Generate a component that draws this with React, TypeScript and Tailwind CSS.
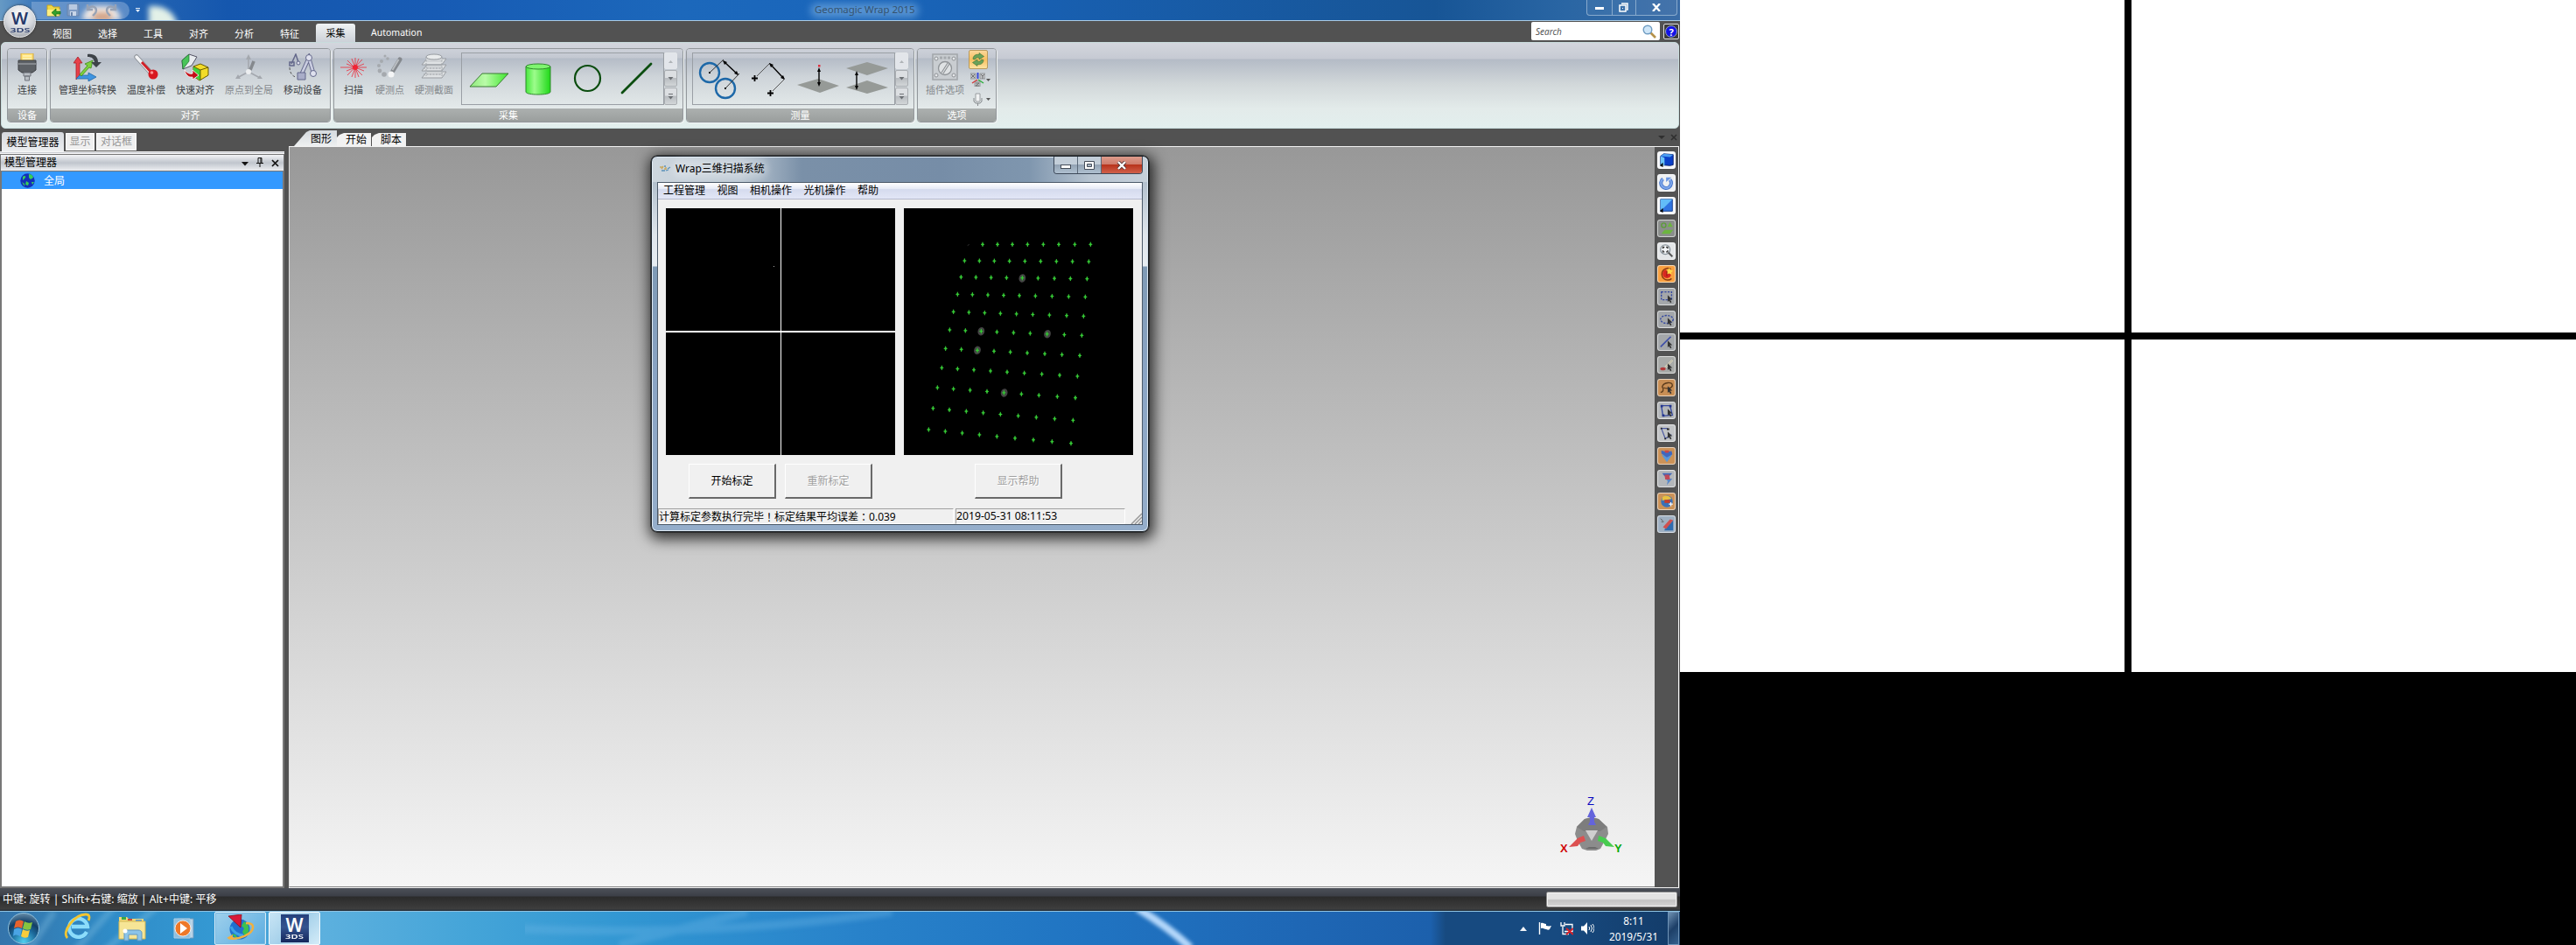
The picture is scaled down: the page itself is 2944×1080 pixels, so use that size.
import React from 'react';

const GRID: { x: number[]; y: [number, number] }[] = [
  { x: [309, 360, 411, 463, 517, 570, 625, 679], y: [148, 148] },
  { x: [247, 298, 349, 401, 454, 508, 562, 617, 673], y: [204, 207] },
  { x: [235, 286, 338, 391, 445, 499, 555, 610, 667], y: [260, 266] },
  { x: [223, 274, 327, 381, 435, 490, 547, 604, 661], y: [319, 328] },
  { x: [209, 262, 316, 370, 425, 481, 538, 597, 655], y: [379, 394] },
  { x: [196, 250, 304, 358, 415, 472, 530, 589, 649], y: [441, 460] },
  { x: [182, 236, 291, 348, 404, 462, 522, 581, 642], y: [505, 529] },
  { x: [169, 223, 279, 336, 393, 452, 512, 573, 634], y: [571, 600] },
  { x: [154, 209, 266, 324, 382, 442, 502, 565, 627], y: [639, 674] },
  { x: [139, 195, 253, 311, 370, 431, 493, 556, 619], y: [710, 751] },
  { x: [124, 181, 239, 298, 358, 420, 483, 547, 612], y: [783, 830] },
];
const BLOBS = [[445, 264], [304, 446], [531, 455], [291, 511], [383, 657]];

function CalibrationView() {
  return (
    <svg className="block h-[282px] w-[262px] bg-black" viewBox="39 24 786 846">
      {BLOBS.map(([x, y], i) => (
        <ellipse key={i} cx={x} cy={y} rx="11.500" ry="14.500" fill="#444" transform={`rotate(15 ${x} ${y})`} />
      ))}
      {GRID.map((r, i) =>
        r.x.map((x, j) => {
          const y = r.y[0] + ((r.y[1] - r.y[0]) * j) / (r.x.length - 1);
          return (
            <g key={`${i}-${j}`}>
              <ellipse cx={x} cy={y} rx="4" ry="5.500" fill="#2f8a2f" />
              <path d={`M${x - 6} ${y}h12M${x} ${y - 8}v16`} stroke="#35d035" strokeWidth="3" />
            </g>
          );
        }),
      )}
      <path d="M257 152l6-4" stroke="#333" strokeWidth="3" />
    </svg>
  );
}

function Icon({ children, w = 32, h = 32, vb }: { children: React.ReactNode; w?: number; h?: number; vb?: string }) {
  return (
    <svg width={w} height={h} viewBox={vb ?? `0 0 ${w} ${h}`} fill="none" className="block shrink-0">
      {children}
    </svg>
  );
}

const plug = (
  <Icon>
    <path d="M9 0h14v10H9z" fill="#ffe27a" stroke="#d4a93a" />
    <path d="M11 3h10M11 6h10" stroke="#fff3b8" strokeWidth="1.500" />
    <path d="M6 8h20v11l-4 3H10l-4-3z" fill="#5d6166" stroke="#3c3f43" />
    <path d="M6 12h20" stroke="#85898e" strokeWidth="2" />
    <path d="M12 22h8v4h-8zM13.500 26h5v5h-5z" fill="#b9bec4" stroke="#70757c" />
  </Icon>
);
const transform = (
  <Icon>
    <path d="M3 30V11H0l5-7 5 7H7v15z" fill="#e8404a" stroke="#a82028" strokeWidth=".8" />
    <path d="M3 29h14v3l9-5-9-5v3H7z" fill="#3f95e0" stroke="#2368a8" strokeWidth=".8" />
    <path d="M7 24L16 14l-3-2 9-4-2 9-2-1L9 26z" fill="#7ed03e" stroke="#3f8a1c" strokeWidth=".8" />
    <path d="M16 1c8-1 12 3 12 9h4l-6 6-6-6h4c-1-4-3-6-8-6z" fill="#3d4248" />
  </Icon>
);
const thermo = (
  <Icon>
    <path d="M5 4l17 19" stroke="#8e9399" strokeWidth="5.500" strokeLinecap="round" />
    <path d="M5 4l17 19" stroke="#f3f4f6" strokeWidth="3.500" strokeLinecap="round" />
    <path d="M11 10l13 14" stroke="#d02028" strokeWidth="2.800" />
    <circle cx="24" cy="24" r="5.500" fill="#d81820" />
    <circle cx="22.500" cy="22" r="1.800" fill="#ff8f90" />
  </Icon>
);
const quickAlign = (
  <Icon>
    <path d="M1 8L9 1l9 3-6 10L2 18z" fill="#e8ecef" stroke="#556" />
    <path d="M1 8L9 1v8L2 18z" fill="#48c458" stroke="#207030" strokeWidth=".7" />
    <path d="M14 15l8-3 9 4v9l-10 6-7-5z" fill="#f3dc28" stroke="#6b5c00" />
    <path d="M14 15l8 4v12l-8-5z" fill="#3ed23e" />
    <path d="M14 15l8 4 9-3M22 19v12" stroke="#6b5c00" />
    <path d="M4 19c3 4 7 5 9 4v-4l7 6-7 5v-3c-5 1-8-3-9-8z" fill="#c40e18" stroke="#fff" strokeWidth=".8" />
  </Icon>
);
const origin = (
  <Icon>
    <path d="M15 21V4M15 21L2 28M15 21l13 7M16 20l6-11" stroke="#a4a8ae" strokeWidth="1.600" />
    <path d="M15 1l3 6h-6zM0 29l3-5 3 5zM31 29h-6l3-4z" fill="#a4a8ae" />
    <path d="M17 19l4-10" stroke="#85898e" strokeWidth="3.500" />
    <circle cx="15" cy="21" r="3" fill="#eceef0" />
  </Icon>
);
const moveDevice = (
  <Icon>
    <path d="M14 25l9-20 5 17" stroke="#63678a" strokeWidth="4.500" />
    <path d="M14 25l9-20 5 17" stroke="#c9cce0" strokeWidth="2.700" />
    <path d="M10 22h9v8h-9z" fill="#a9adc8" stroke="#63678a" />
    <circle cx="23" cy="5" r="3.500" fill="#dfe1ee" stroke="#63678a" />
    <circle cx="28" cy="23" r="3.500" fill="#dfe1ee" stroke="#63678a" />
    <path d="M3 12L8 1l3 9M1 10h5v4H1z" stroke="#63678a" strokeWidth="1.500" />
    <circle cx="11" cy="11" r="2" fill="#dfe1ee" stroke="#63678a" />
    <path d="M1 16c0 6 3 10 7 11" stroke="#555" strokeDasharray="3 2" />
  </Icon>
);
const scan = (
  <Icon>
    <path d="M1 16h30M18 5v23M9 8l17 17M26 7L9 25M14 6l8 21M22 6l-8 21M8 12l20 8M28 12L8 20" stroke="#ee2a38" strokeWidth=".8" />
    <circle cx="18" cy="16" r="3" fill="#f02434" />
  </Icon>
);
const hardPoint = (
  <Icon>
    <g fill="#a5a9ae">
      <circle cx="10" cy="3" r="1.500" /><circle cx="13" cy="6" r="1.800" /><circle cx="6" cy="9" r="2" />
      <circle cx="3" cy="14" r="2" /><circle cx="4" cy="20" r="2.400" /><circle cx="9" cy="24" r="2.800" />
    </g>
    <path d="M19 20l8-13" stroke="#85898e" strokeWidth="5" strokeLinecap="round" />
    <path d="M18.500 19l7-12" stroke="#b9bdc1" strokeWidth="2" />
    <circle cx="17" cy="24" r="3.500" fill="#f4f5f6" />
  </Icon>
);
const hardSection = (
  <Icon>
    <path d="M2 28l6-7h22l-5 7zM2 20l6-7h22l-5 7zM2 13l6-7h22l-5 7z" fill="#dfe2e4" stroke="#999da2" />
    <path d="M7 4h18v6H7zM7 14h18v4H7zM7 21h18v4H7z" fill="#d0d3d6" />
    <ellipse cx="16" cy="4" rx="9" ry="3" fill="#e9ebec" stroke="#999da2" />
    <path d="M7 4v22M25 4v22M4 17h22M4 24h22" stroke="#a2a6ab" strokeDasharray="2 1.500" />
  </Icon>
);

function RibbonItem({ icon, label, off }: { icon: React.ReactNode; label: string; off?: boolean }) {
  return (
    <div className={off ? 'flex flex-col items-center gap-[3px] text-[#85898d]' : 'flex flex-col items-center gap-[3px] text-[#3c3f44]'}>
      {icon}
      <span className="whitespace-nowrap text-[11px] leading-[13px]">{label}</span>
    </div>
  );
}

function Group({ label, className, children }: { label: string; className: string; children: React.ReactNode }) {
  return (
    <div className={`flex h-[85px] shrink-0 flex-col overflow-hidden rounded-[4px] border border-[#92979b] shadow-[1px_1px_0_#f0f4f4] ${className}`}>
      <div className="flex h-[68px] items-start bg-[linear-gradient(#cdd1d9_0,#c3c8d1_10px,#b5bcc7_11px,#ced4d9_32px,#e4eaea_68px)]">{children}</div>
      <div className="flex h-[15px] items-center justify-center bg-[linear-gradient(#acb0af,#9a9e9d)] text-[11px] leading-none text-white">{label}</div>
    </div>
  );
}

function Gallery({ children, className }: { children: React.ReactNode; className: string }) {
  return (
    <div className={`mt-[4px] flex h-[60px] w-[247px] ${className}`}>
      <div className="flex w-[232px] border border-[#9a9fa5]">{children}</div>
      <div className="flex w-[15px] flex-col gap-px">
        <div className="flex h-[19px] items-center justify-center rounded-[2px] border border-[#e4e7ea] bg-[#e2e5ea]">
          <Icon w={7} h={4}><path d="M1 4l2.500-3L6 4z" fill="#aeb2b6" /></Icon>
        </div>
        <div className="flex h-[19px] items-center justify-center rounded-[2px] border border-[#a9adb1] bg-[linear-gradient(#dcdfe2_45%,#b8bcc0_50%,#d2d6d8)]">
          <Icon w={7} h={4}><path d="M.5 0h6l-3 3.500z" fill="#6c7074" /></Icon>
        </div>
        <div className="flex h-[20px] flex-col items-center justify-center gap-[2px] rounded-[2px] border border-[#a9adb1] bg-[linear-gradient(#dcdfe2_45%,#b8bcc0_50%,#d2d6d8)]">
          <div className="h-px w-[5px] bg-[#6c7074]" />
          <Icon w={7} h={4}><path d="M.5 0h6l-3 3.500z" fill="#6c7074" /></Icon>
        </div>
      </div>
    </div>
  );
}

function Defs() {
  return (
    <defs>
      <linearGradient id="gPlane"><stop stopColor="#8fe87c" /><stop offset=".4" stopColor="#b9fba8" /><stop offset="1" stopColor="#3fe62e" /></linearGradient>
      <linearGradient id="gCyl"><stop stopColor="#46e83c" /><stop offset=".35" stopColor="#9dfc8c" /><stop offset="1" stopColor="#1fd818" /></linearGradient>
    </defs>
  );
}

function Ribbon() {
  return (
    <div className="ml-px flex h-[99px] w-[1918px] rounded-[5px] border border-[#c8dcdc] bg-[linear-gradient(#d3d6dd_0,#c6cad3_18px,#b4bbc6_19px,#d2d8da_48px,#e3ebea_75px,#e2efee_98px)] pl-[6px] pt-[6px]">
      <Group label="设备" className="mr-[3px] w-[46px]">
        <div className="flex w-full justify-center pt-[5px]"><RibbonItem icon={plug} label="连接" /></div>
      </Group>
      <Group label="对齐" className="mr-[3px] w-[321px]">
        <div className="flex gap-3 pl-[9px] pt-[5px]">
          <RibbonItem icon={transform} label="管理坐标转换" />
          <RibbonItem icon={thermo} label="温度补偿" />
          <RibbonItem icon={quickAlign} label="快速对齐" />
          <RibbonItem icon={origin} label="原点到全局" off />
          <RibbonItem icon={moveDevice} label="移动设备" />
        </div>
      </Group>
      <Group label="采集" className="mr-[3px] w-[400px]">
        <div className="flex gap-[9px] pl-[6px] pt-[5px]">
          <RibbonItem icon={scan} label="扫描" />
          <RibbonItem icon={hardPoint} label="硬测点" off />
          <div className="pl-[3px]"><RibbonItem icon={hardSection} label="硬测截面" off /></div>
        </div>
        <Gallery className="ml-[9px]">
          <Icon w={230} h={58}>
            <Defs />
            <path d="M9 38l14-15h30L39 38z" fill="url(#gPlane)" stroke="#3b7a34" />
            <path d="M73 15v29c0 4 28 4 28 0V15z" fill="url(#gCyl)" stroke="#2f8a2c" />
            <ellipse cx="87" cy="15" rx="14" ry="3" fill="#7ff470" stroke="#2f8a2c" />
            <circle cx="143.500" cy="28.500" r="14.500" stroke="#0b4d0f" strokeWidth="2.200" />
            <path d="M183 45l33-33" stroke="#0b4d0f" strokeWidth="2.800" strokeLinecap="round" />
          </Icon>
        </Gallery>
      </Group>
      <Group label="测量" className="mr-[3px] w-[261px]">
        <Gallery className="ml-[6px]">
          <Icon w={230} h={58}>
            <circle cx="19" cy="22" r="11" stroke="#1d68a8" strokeWidth="2.400" />
            <circle cx="37" cy="40" r="11" stroke="#1d68a8" strokeWidth="2.400" />
            <path d="M19 22L35 7M37 40l16-17" stroke="#333" />
            <path d="M35 9l16 15" stroke="#000" strokeWidth="1.400" />
            <path d="M34 8l5 2-3 3zM52 25l-5-2 3-3zM18 21h2v2h-2zM36 39h2v2h-2z" fill="#000" />
            <path d="M67 28.500h7M70.500 25v7M85 45.500h7M88.500 42v7" stroke="#000" strokeWidth="1.800" />
            <path d="M73 26l15-15M91 43l13-13" stroke="#555" />
            <path d="M88 12l16 17" stroke="#000" strokeWidth="1.400" />
            <path d="M87 11l5 2-3 3zM105 30l-5-2 3-3z" fill="#000" />
            <path d="M119 36l24-7 24 8-22 8z" fill="#969a97" />
            <path d="M144 20v14" stroke="#000" strokeWidth="1.400" />
            <path d="M144 16l2 5h-4zM144 38l2-5h-4z" fill="#000" />
            <path d="M143 13h2.500v2.500H143z" fill="#e03040" />
            <path d="M175 17l24-7 24 7-24 8zM175 39l24-8 24 8-24 7z" fill="#969a97" />
            <path d="M187 24v14" stroke="#000" strokeWidth="1.400" />
            <path d="M187 20l2 5h-4zM187 42l2-5h-4z" fill="#000" />
          </Icon>
        </Gallery>
      </Group>
      <Group label="选项" className="w-[91px]">
        <div className="ml-[9px] pt-[5px]">
          <RibbonItem
            off
            label="插件选项"
            icon={
              <Icon>
                <path d="M2 1h28v29H2z" fill="#c9cdd1" stroke="#a2a6aa" strokeWidth="1.600" />
                <path d="M10 5h12" stroke="#a5a9ad" strokeWidth="3" strokeDasharray="3 1.500" />
                <circle cx="16" cy="17" r="7.500" fill="#dfe2e4" stroke="#8f9397" strokeWidth="1.300" />
                <path d="M12 22l7-11M14 23l7-11" stroke="#8f9397" strokeWidth="1.200" />
                <g stroke="#8f9397" fill="#e6e8ea"><circle cx="6" cy="6" r="2" /><circle cx="26" cy="6" r="2" /><circle cx="6" cy="25" r="2" /><circle cx="26" cy="25" r="2" /></g>
              </Icon>
            }
          />
        </div>
        <div className="ml-[5px] flex flex-col gap-[2px] pt-px">
          <div className="flex h-[22px] w-[22px] items-center justify-center rounded-[2px] border border-[#b99a5c] bg-[linear-gradient(#fbd79a,#f9c060_50%,#fde3a0)]">
            <Icon w={16} h={16}>
              <path d="M2 7.500C2 4 5 1.500 9 2.500V.5l5.500 4L9 8V6C6.500 5.500 5 6 4.500 8z" fill="#6aa25a" stroke="#3d7434" strokeWidth=".6" />
              <path d="M14 8.500C14 12 11 14.500 7 13.500v2l-5.500-4L7 8v2c2.500.5 4 0 4.500-2z" fill="#6aa25a" stroke="#3d7434" strokeWidth=".6" />
            </Icon>
          </div>
          <div className="flex h-[20px] items-center gap-px pl-[2px]">
            <Icon w={17} h={16}>
              <path d="M0 1h6v6H0zM11 1h6v6h-6zM5 10h6v6H5z" fill="#c2c5c8" stroke="#85898c" strokeWidth=".8" />
              <path d="M1 2l4 4M5 2L1 6M12 2l2 2 2-2M14 4v3M6 12h4l-4 3h4" stroke="#666" strokeWidth=".9" />
              <path d="M8.500 0v7" stroke="#3448d8" strokeWidth="2" />
              <path d="M8 8l-6 4" stroke="#d04040" strokeWidth="1.500" /><path d="M9 8l6 4" stroke="#30b040" strokeWidth="1.500" />
            </Icon>
            <Icon w={5} h={3}><path d="M0 0h5L2.500 3z" fill="#555" /></Icon>
          </div>
          <div className="flex h-[20px] items-center gap-[4px] pl-[5px]">
            <Icon w={11} h={15}>
              <path d="M3 1h5v9H3z" fill="#f1f2f3" stroke="#999da0" /><path d="M1 6v4l2 2h5l2-2V6M5.500 12v3" stroke="#85898c" />
            </Icon>
            <Icon w={5} h={3}><path d="M0 0h5L2.500 3z" fill="#555" /></Icon>
          </div>
        </div>
      </Group>
    </div>
  );
}

function TitleBar() {
  return (
    <div className="relative flex h-[24px] items-center justify-between overflow-hidden border-b border-[#a9cbe6] bg-[linear-gradient(90deg,#6699c4_0,#3b78bb_40px,#2565b3_150px,#1557ae_260px,#175bb4_500px,#1c68bb_780px,#1a66bb_950px,#185fb0_1200px,#175596_1640px,#2a66a4_1790px,#3a6ca6_1920px)]">
      <div className="absolute left-[170px] top-[7px] h-[30px] w-[33px] rounded-tr-[26px] bg-[#e3f1e8] blur-[3px]" />
      <div className="relative ml-[36px] flex h-[20px] w-[112px] items-center gap-[6px] overflow-hidden rounded-r-full bg-[#9dbbe0]/45 pl-[17px]">
        <div className="absolute left-[58px] top-[5px] h-[16px] w-[44px] rounded-t-full bg-[#f2ebe6] blur-[3px]" />
        <div className="absolute left-[70px] top-[12px] h-[10px] w-[22px] rounded-full bg-[#d3a285] blur-[3px]" />
        <div className="relative flex items-center gap-[6px]">
          <Icon w={17} h={16}>
            <path d="M1 2h5l2 2h7v10H1z" fill="#f0d848" stroke="#c6a520" /><path d="M1 7h15l-2 7H1z" fill="#ffee80" />
            <path d="M16 12h-5v3l-5-4.500L11 6v3h5z" fill="#34a02c" stroke="#136a10" strokeWidth=".7" />
          </Icon>
          <Icon w={15} h={15}>
            <path d="M1 1h13v13H1z" fill="#7f9cc4" stroke="#6984ab" /><path d="M3 1h9v6H3z" fill="#b8c9e0" /><path d="M4 9h7v5H4z" fill="#c9d6e8" /><path d="M5 10h2v4H5z" fill="#6984ab" />
          </Icon>
          <Icon w={16} h={15}><path d="M3 1v6h6M3 6c4-4 10-3 10 2 0 3-2 4-4 6" stroke="#98a3b5" strokeWidth="2.400" /></Icon>
          <Icon w={16} h={15}><path d="M13 1v6H7M13 6C9 2 3 3 3 8c0 3 2 4 4 6" stroke="#98a3b5" strokeWidth="2.400" /></Icon>
        </div>
      </div>
      <div className="absolute left-[155px] top-[9px]"><Icon w={5} h={5}><path d="M0 .5h5" stroke="#e9f1fa" /><path d="M0 2h5L2.500 5z" fill="#e9f1fa" /></Icon></div>
      <div className="absolute left-[926px] top-[4px] h-[16px] w-[124px] rounded-full bg-[#7fb2e4]/60 blur-[4px]" />
      <div className="absolute left-[931px] top-[4px] whitespace-nowrap text-[11.5px] leading-[14px] tracking-[-0.05px] text-[#35536f]">Geomagic Wrap 2015</div>
      <div className="relative mr-[3px] flex h-[24px] w-[104px] self-start">
        <div className="flex h-[19px] w-full -translate-y-px rounded-b-[4px] border border-t-0 border-[#88aacd] bg-white/5">
          <div className="flex w-[29px] items-center justify-center border-r border-[#88aacd] pt-[3px]"><div className="h-[3px] w-[10px] bg-white" /></div>
          <div className="flex w-[27px] items-center justify-center border-r border-[#88aacd] pr-[2px]">
            <Icon w={11} h={11}><path d="M3 1h7v7H9M1 3h7v7H1z" stroke="#fff" strokeWidth="1.500" /><path d="M4 6h1v1H4z" fill="#fff" /></Icon>
          </div>
          <div className="flex flex-1 items-center justify-center"><Icon w={10} h={9}><path d="M1 0l8 9M9 0L1 9" stroke="#fff" strokeWidth="2.300" /></Icon></div>
        </div>
      </div>
    </div>
  );
}

const TABS = ['视图', '选择', '工具', '对齐', '分析', '特征'];

function RibbonTabs() {
  return (
    <div className="flex h-[24px] items-stretch bg-[#525252] pl-[45px] text-[11px] leading-none text-white">
      {TABS.map((t) => (
        <div key={t} className="flex w-[52px] items-center justify-center pt-[4px]">{t}</div>
      ))}
      <div className="ml-[4px] mt-[3px] flex w-[45px] items-center justify-center rounded-t-[3px] bg-[linear-gradient(#f0f3f4,#ccd1d8)] text-black">采集</div>
      <div className="flex items-center pl-[18px] pt-[3px] text-[10.5px]">Automation</div>
      <div className="ml-auto mt-px flex h-[21px] w-[147px] items-center justify-between rounded-[2px] bg-white pl-[5px] pr-[4px]">
        <span className="text-[10px] italic text-[#555]">Search</span>
        <Icon w={16} h={16}>
          <path d="M9 9l6 6" stroke="#b5924a" strokeWidth="2.600" /><circle cx="6" cy="6" r="4.800" fill="#cfe6f8" stroke="#6f9cc2" strokeWidth="1.400" />
        </Icon>
      </div>
      <div className="ml-[4px] mr-px mt-[3px] flex h-[18px] w-[18px] items-center justify-center rounded-[2px] border border-[#e0e0e0] bg-[#3b3b3b]">
        <div className="flex h-[14px] w-[14px] items-center justify-center rounded-full border border-[#9ab] bg-[#1212e8] text-[11px] font-bold">?</div>
      </div>
    </div>
  );
}

function LeftPanel() {
  return (
    <div className="flex w-[325px] flex-col text-[12px] leading-none">
      <div className="flex h-[26px] items-end gap-[2px] pl-[2px] pt-[4px]">
        <div className="flex h-[22px] w-[71px] items-center justify-center rounded-t-[3px] bg-[linear-gradient(#d6d9de,#eceef0)] pt-[2px] text-black">模型管理器</div>
        <div className="mb-px flex h-[20px] w-[33px] items-center justify-center border border-white bg-[#f0f0f0] text-[#969696]">显示</div>
        <div className="mb-px flex h-[20px] w-[46px] items-center justify-center border border-white bg-[#f0f0f0] text-[#969696]">对话框</div>
      </div>
      <div className="h-[3px] border-y border-[#f6f6f6] bg-[#c9ccd2]" />
      <div className="flex h-[20px] items-center border border-[#777] bg-[linear-gradient(#f3f4f6,#c0c5cd_50%,#eceef1)] pl-[4px] pr-[5px] text-black">
        <span className="mr-auto">模型管理器</span>
        <div className="mr-[9px] mt-[2px]"><Icon w={8} h={5}><path d="M0 0h8L4 4.500z" fill="#111" /></Icon></div>
        <div className="mb-[2px] mr-[9px]"><Icon w={8} h={11}><path d="M2 6.500V.5h4v6M0 6.500h8M4 7v4M5 1v5" stroke="#111" /></Icon></div>
        <Icon w={9} h={9}><path d="M1 1l7 7M8 1L1 8" stroke="#111" strokeWidth="1.700" /></Icon>
      </div>
      <div className="flex-1 border-x-2 border-b-2 border-[#777] bg-white">
        <div className="flex h-[20px] items-center gap-[10px] bg-[#3399ff] pl-[21px] pt-px text-white">
          <Icon w={17} h={17}>
            <circle cx="8.500" cy="8.500" r="8.200" fill="#1230b8" />
            <path d="M3 4c2-2 4-1 3 1L3 8zM10 1c3 0 5 2 5 4l-3 2-2-2zM7 9l3 2-1 3-3-1zM13 10h3l-2 3zM2 10l3 2v3z" fill="#38cf58" />
          </Icon>
          <span>全局</span>
        </div>
      </div>
    </div>
  );
}

const cursor = <path d="M11 8l6 6h-3l2 3-1.500 1-2-3-1.500 2z" fill="#333" />;

const TOOLS: { bg: string; art: React.ReactNode }[] = [
  { bg: 'bg-[#f4f6f8]', art: <><path d="M2 5l4-3 12 1v13l-4 1-12-1z" fill="#0a3fc8" stroke="#0a1f6a" /><path d="M2 5l5 2v10l-5-1z" fill="#6cc4f8" /><path d="M2 5l4-3 12 1-4 3z" fill="#4a9cf0" /><path d="M1 17l4-4v6z" fill="#000" /></> },
  { bg: 'bg-[#eef0f2]', art: <><path d="M5 5a6.500 6.500 0 1 0 9 1" stroke="#3f6fc8" strokeWidth="4.400" /><path d="M5 5a6.500 6.500 0 1 0 9 1" stroke="#7da6ea" strokeWidth="2.500" /><path d="M9 9V3h7z" fill="#6a96e2" /></> },
  { bg: 'bg-[#f4f6f8]', art: <><path d="M2 2h15v15H2z" fill="#2f74e0" stroke="#163c88" /><path d="M2 2h15L2 17z" fill="#62bdf8" /><path d="M1 17l4-4v6z" fill="#000" /></> },
  { bg: 'bg-[#8b8e8c]', art: <><circle cx="6" cy="6" r="2.800" stroke="#5c9c3a" strokeWidth="1.500" /><path d="M14 2l3.500 6h-7zM3 17l4-5h11l-4 5z" fill="#6cb53f" /></> },
  { bg: 'bg-[#e4e6e8]', art: <><circle cx="8" cy="8" r="6" fill="#f4f6f8" stroke="#8a949c" strokeWidth="1.500" /><path d="M5 7V5h2M9 5h2v2M11 9v2H9M7 11H5V9" stroke="#333" strokeWidth="1.400" /><path d="M12 12l5 5" stroke="#555" strokeWidth="2.200" /></> },
  { bg: 'bg-[#f8a040]', art: <><path d="M15 4A7.500 7.500 0 1 0 16 16" stroke="#8a3a10" strokeWidth="1.600" /><circle cx="10" cy="10" r="5.500" fill="#d82820" /><path d="M13 2l1.500 3L18 6l-2.500 2 .5 3-3-1.500-3 1 .5-3L9 5l3-.500z" fill="#ffd848" /><path d="M10 6v7" stroke="#8a1010" /></> },
  { bg: 'bg-[#a4a7aa]', art: <><path d="M3 4h13v10H3z" stroke="#3448a0" strokeWidth="1.500" strokeDasharray="2.500 1.500" />{cursor}</> },
  { bg: 'bg-[#a4a7aa]', art: <><ellipse cx="10" cy="10" rx="8" ry="5" stroke="#3448a0" strokeWidth="1.500" strokeDasharray="2.500 1.500" />{cursor}</> },
  { bg: 'bg-[#a4a7aa]', art: <><path d="M2 16L15 3" stroke="#3c4ca8" strokeWidth="1.800" />{cursor}</> },
  { bg: 'bg-[#a8aaa8]', art: <><path d="M8 13l9-9" stroke="#eee8c8" strokeWidth="2.200" /><path d="M8 13l9-9" stroke="#777" strokeWidth=".7" /><ellipse cx="5" cy="15" rx="3.500" ry="2" fill="#b03838" />{cursor}</> },
  { bg: 'bg-[#c98f55]', art: <><path d="M2 16c4 0 4-5 2-7 2-6 13-7 13-2 0 4-7 5-11 3" stroke="#5c3c1c" strokeWidth="1.500" />{cursor}</> },
  { bg: 'bg-[#b4b7ba]', art: <><path d="M3 4h11l3 12-12 1z" stroke="#3448a0" strokeWidth="1.500" /><path d="M2 3h3v3H2zM13 3h3v3h-3zM4 15h3v3H4z" fill="#23358c" />{cursor}</> },
  { bg: 'bg-[#c2c4c6]', art: <><path d="M3 4l5 13 8-5M3 4h8" stroke="#4a58a0" strokeWidth="1.300" /><path d="M2 3h2v2H2zM10 4h3v2h-3zM7 16h2v2H7z" fill="#222" />{cursor}</> },
  { bg: 'bg-[#cb9258]', art: <><path d="M3 8l7 10 7-10-7 3z" fill="#5a98d8" /><path d="M3 3l6 2 7-1 1 4-7 4-7-5z" fill="#3f68c0" /><path d="M7 3h6l-1 3H8z" fill="#c84848" /></> },
  { bg: 'bg-[#b4b7ba]', art: <><path d="M8 10h9l-7 8 1-5z" fill="#5a88c8" /><path d="M4 3h13l-4 4H7z" fill="#4468b8" /><path d="M7 5h6l1 6H8z" fill="#c04858" /></> },
  { bg: 'bg-[#cb9258]', art: <><circle cx="10" cy="10" r="7.500" fill="#3a70b8" /><path d="M4 5c4-4 10-2 12 2L4 9z" fill="#e8c040" /><path d="M7 8h7v4H7z" fill="#c83c28" /><path d="M15 11v5M12.500 13.500h5" stroke="#fff" strokeWidth="1.400" /></> },
  { bg: 'bg-[#9fb0c2]', art: <><path d="M7 17L18 5v13H7z" fill="#2f6cb0" /><path d="M5 14L14 4l4 1-9 11z" fill="#d05050" /><path d="M2 3l3 3M3 7h3" stroke="#555" /></> },
];

function SideTools() {
  return (
    <div className="flex w-[28px] flex-col gap-[6px] border-r border-white bg-[#535353] pl-[3px] pt-[5px]">
      {TOOLS.map((t, i) => (
        <div key={i} className={`flex h-[20px] w-[21px] items-center justify-center rounded-[3px] border border-white/60 ${t.bg}`}>
          <Icon w={18} h={18} vb="0 0 20 20">{t.art}</Icon>
        </div>
      ))}
    </div>
  );
}

function Triad() {
  return (
    <div className="absolute bottom-[24px] right-[29px] h-[74px] w-[82px] font-['Liberation_Sans',sans-serif] text-[13px] font-bold leading-none">
      <svg className="block h-full w-full" viewBox="0 0 82 74">
        <path d="M31 21l8-2 8 2 10 9 1 8-4 8-5 9-5 2H34l-6-2-5-9-3-8 2-8z" fill="#8c8c8c" />
        <path d="M31 21l8-2 8 2 9 9-7 5H30l-8-5z" fill="#7d7d7d" />
        <path d="M32 55l4-2h7l4 2z" fill="#6a6a6a" />
        <path d="M32 34h14l-7 12z" fill="#cfcfcf" />
        <path d="M39 8l5 11h-2v5l2 4h-9l2-4v-5h-3z" fill="#6464dc" />
        <path d="M13 53l10-10 7-3 2 6-6 2-3 4z" fill="#dc5050" />
        <path d="M65 53L55 43l-8-3-1 6 6 2 3 4z" fill="#48cc50" />
      </svg>
      <span className="absolute left-[34px] top-[-6px] font-normal text-[#0808c0]">Z</span>
      <span className="absolute left-[3px] top-[48px] text-[#d00808]">X</span>
      <span className="absolute left-[65px] top-[48px] text-[#08a808]">Y</span>
    </div>
  );
}

function ClassicButton({ label, off, className }: { label: string; off?: boolean; className: string }) {
  return (
    <div className={`flex h-[40px] w-[100px] items-center justify-center border border-b-2 border-r-2 border-b-[#696969] border-l-white border-r-[#696969] border-t-white bg-[#f0f0f0] ${off ? 'text-[#a0a0a0] [text-shadow:1px_1px_0_#fff]' : 'text-black'} ${className}`}>
      {label}
    </div>
  );
}

function ScanDialog() {
  return (
    <div className="absolute left-[413px] top-[10px] flex h-[430px] w-[569px] flex-col rounded-[7px] border border-[#1c2228] bg-[linear-gradient(#c3ced9_0,#b4c1ce_30px,#dfe5eb_90px,#e8edf2_125px,#7f9ab5_126px,#8aa4c4_250px,#95aecb)] px-[6px] pb-[7px] text-[12px] leading-none text-black shadow-[0_0_0_0.5px_#111,2px_4px_16px_4px_rgba(0,0,0,0.75),inset_0_0_0_1px_#dfeaf4]">
      <div className="-mx-[5px] mt-px flex h-[28px] items-start rounded-t-[6px] bg-[linear-gradient(90deg,#cdd6de_0,#bcc8d3_100px,#7a90a8_170px,#768da7_330px,#7f96ae_430px,#b6c3d0_500px,#c6d0da)]">
        <div className="ml-[7px] mt-[7px]">
          <Icon w={14} h={10}><path d="M1 4h3M3 6l2-3M6 6h2M8 4v3" stroke="#c8a860" strokeWidth="1.500" /><path d="M6 3h2M10 6l3-2M3 8h4M8 8l3-1" stroke="#5a90b8" strokeWidth="1.300" /></Icon>
        </div>
        <span className="ml-[5px] mt-[6px] rounded-full bg-white/25 text-[12px] leading-[14px] shadow-[0_0_7px_4px_rgba(255,255,255,0.25)]">Wrap三维扫描系统</span>
        <div className="ml-auto mr-[5px] flex h-[20px] -translate-y-px overflow-hidden rounded-b-[4px] border border-t-0 border-[#3c4858]">
          <div className="flex w-[27px] items-center justify-center border-r border-[#5a6878] bg-[linear-gradient(#c3ced9_45%,#93a3b4_50%,#afc0d0)]"><div className="mt-[4px] h-[5px] w-[12px] border border-[#444c58] bg-white" /></div>
          <div className="flex w-[27px] items-center justify-center border-r border-[#5a6878] bg-[linear-gradient(#c3ced9_45%,#93a3b4_50%,#afc0d0)]"><Icon w={12} h={10}><path d="M.5.5h11v9H.5z" fill="#fff" stroke="#444c58" /><path d="M3.500 3.500h5v3h-5z" fill="#a9b7c5" stroke="#444c58" /></Icon></div>
          <div className="flex w-[46px] items-center justify-center bg-[linear-gradient(#dd9c8c_0,#cf7c6c_45%,#b8331c_50%,#d0604a)]"><Icon w={12} h={10}><path d="M2 1l8 8M10 1L2 9" stroke="#533" strokeWidth="4" /><path d="M2 1l8 8M10 1L2 9" stroke="#fff" strokeWidth="2.400" /></Icon></div>
        </div>
      </div>
      <div className="flex flex-1 flex-col border border-[#4c5a6a] bg-[#f0f0f0]">
        <div className="flex h-[19px] items-center gap-[13.500px] border-b border-[#b4b8cc] bg-[linear-gradient(#fff,#e6eaf6_38%,#d5dbee_42%,#e2e6f6)] pl-[6px]">
          <span>工程管理</span><span>视图</span><span>相机操作</span><span>光机操作</span><span>帮助</span>
        </div>
        <div className="flex gap-[10px] pl-[9px] pt-[10px]">
          <div className="grid h-[282px] w-[262px] grid-cols-[131px_130px] grid-rows-[140px_140px] gap-x-px gap-y-[2px] bg-white">
            <div className="bg-black"><div className="ml-[123px] mt-[66px] h-px w-px bg-[#aaa]" /></div>
            <div className="bg-black" /><div className="bg-black" /><div className="bg-black" />
          </div>
          <CalibrationView />
        </div>
        <div className="flex pl-[35px] pt-[10px]">
          <ClassicButton label="开始标定" className="" />
          <ClassicButton label="重新标定" off className="ml-[10px]" />
          <ClassicButton label="显示帮助" off className="ml-[117px]" />
        </div>
        <div className="mt-auto flex h-[18px] gap-[2px]">
          <div className="flex w-[338px] items-center whitespace-nowrap border border-b-white border-l-[#a0a0a0] border-r-white border-t-[#a0a0a0] pt-px">
            <span>计算标定参数执行完毕</span><span className="font-['Noto_Sans_CJK_TC',sans-serif]">！</span><span>标定结果平均误差</span><span className="font-['Noto_Sans_CJK_TC',sans-serif]">：</span><span>0.039</span>
          </div>
          <div className="flex w-[194px] items-center border border-b-white border-l-[#a0a0a0] border-r-white border-t-[#a0a0a0] pt-px text-[12.2px]">2019-05-31 08:11:53</div>
          <div className="ml-auto self-end"><Icon w={13} h={13}><path d="M1 13L13 1M5 13l8-8M9 13l4-4" stroke="#999" strokeWidth="1.500" /></Icon></div>
        </div>
      </div>
    </div>
  );
}

function DocTab({ label, active }: { label: string; active?: boolean }) {
  return (
    <div className={active ? 'flex h-[18px] w-[49px] items-center justify-end bg-[linear-gradient(#d5dade,#eef0f1)] pr-[6px] pt-px [clip-path:polygon(0_100%,14px_2px,18px_0,100%_0,100%_100%)]' : 'mr-px flex h-[15px] w-[39px] items-center justify-end bg-[#f2f2f2] pr-[5px] [clip-path:polygon(0_100%,0_5px,3px_2px,8px_0,100%_0,100%_100%)]'}>
      {label}
    </div>
  );
}

function Workspace() {
  return (
    <div className="flex flex-1 flex-col pl-[5px] pr-px">
      <div className="flex h-[20px] items-end pl-[6px] text-[12px] leading-none text-black">
        <DocTab label="图形" active />
        <DocTab label="开始" />
        <DocTab label="脚本" />
        <div className="ml-auto flex items-center gap-[6px] self-center pr-[2px]">
          <Icon w={8} h={4}><path d="M0 0h8L4 4z" fill="#2f2f2f" /></Icon>
          <Icon w={8} h={8}><path d="M1 1l6 6M7 1L1 7" stroke="#2f2f2f" strokeWidth="1.600" /></Icon>
        </div>
      </div>
      <div className="flex flex-1 border-y border-[#f2f2f2]">
        <div className="relative flex-1 border-b border-l border-b-[#888] border-l-[#ddd] bg-[linear-gradient(#989898,#f5f5f5)]">
          <ScanDialog />
          <Triad />
        </div>
        <SideTools />
      </div>
    </div>
  );
}

function StatusBar() {
  return (
    <div className="flex h-[26px] items-center justify-between bg-[linear-gradient(#4c5058_0,#3c3f47_9px,#2b2b2b_10px,#3e3e3e_24px,#1b2836)] pl-[3px] pr-[3px] text-[12px] leading-none text-white">
      <span className="whitespace-pre tracking-[0.04px]">中键: 旋转 | Shift+右键: 缩放 | Alt+中键: 平移</span>
      <div className="h-[18px] w-[150px] rounded-[2px] border border-[#888] bg-[linear-gradient(#e3e3e3_45%,#c3c3c3_55%,#d6d6d6)] shadow-[inset_0_0_0_1px_#f2f2f2]" />
    </div>
  );
}

function StartOrb() {
  return (
    <div className="ml-[9px] flex h-[36px] w-[36px] items-center justify-center rounded-full border border-[#8fc0dc] bg-[radial-gradient(circle_at_50%_95%,#4fd0f0_0,#1c6a9c_40%,#123e66_62%,#86abc4_100%)]">
      <Icon w={26} h={24}>
        <path d="M4 4c3-2 6-2 9 0l-2 8c-3-2-6-2-9 0z" fill="#e8622c" />
        <path d="M14 4c3 2 6 2 9 1l-2 8c-3 1-6 1-9-1z" fill="#86c440" />
        <path d="M2 13c3-2 6-2 9 0l-2 8c-3-2-6-2-8 0z" fill="#4aa4e4" />
        <path d="M12 13c3 2 6 2 8 1l-2 8c-3 1-5 1-8-1z" fill="#f8cc3c" />
      </Icon>
    </div>
  );
}

function Taskbar() {
  return (
    <div className="relative flex h-[39px] items-center overflow-hidden border-t border-[#8fc3e2] bg-[linear-gradient(90deg,#3474ab_0,#3380b8_60px,#2f8cc8_130px,#3498d2_240px,#5cb0de_370px,#44a4d8_540px,#3196d2_720px,#2882ca_980px,#2074c2_1240px,#1e66b4_1500px,#1c60ac_1635px,#174a80_1652px,#174a80_1780px,#133b68_1920px)]">
      <svg className="absolute left-[600px] top-0 h-full w-[800px]" viewBox="0 0 800 39">
        <path d="M708 -4q36 22 62 46" stroke="#b5d8fb" strokeWidth="9" fill="none" className="blur-[2px]" />
        <path d="M-200 8Q150 40 420 0M100 39L250 0" stroke="#6ab4e4" strokeOpacity=".35" strokeWidth="10" fill="none" className="blur-[3px]" />
      </svg>
      <svg className="absolute left-0 top-0 h-full w-[250px]" viewBox="0 0 250 39">
        <path d="M60 0L30 45M130 -5L85 45M180 -5l-60 50" stroke="#8ecbe8" strokeOpacity=".3" strokeWidth="8" className="blur-[3px]" />
      </svg>
      <div className="relative flex h-full items-center">
        <StartOrb />
        <div className="-mt-[4px] ml-[28px]">
          <Icon w={32} h={32}>
            <path d="M26 22a10.500 10.500 0 1 1 1-6H9" stroke="#2a88c8" strokeWidth="6" />
            <path d="M26 22a10.500 10.500 0 1 1 1-6H9" stroke="#8cdcfa" strokeWidth="4.400" />
            <path d="M4 29C-3 22 12 2 25 2c4 0 5 3 3 7" stroke="#f3c530" strokeWidth="2.800" />
          </Icon>
        </div>
        <div className="ml-[29px]">
          <Icon w={34} h={32}>
            <path d="M2 3h9l2 2h17v4H2z" fill="#eed878" /><path d="M5 3h5v3H5z" fill="#38a848" /><path d="M12 5h5v2h-5z" fill="#d04838" /><path d="M21 6h7v2h-7z" fill="#5898d8" />
            <path d="M2 8h30v20H2z" fill="#f6e596" stroke="#d4b850" />
            <path d="M8 30v-9c0-2 2-3 4-3h12c2 0 4 1 4 3v9h-5v-7H13v7z" fill="#8cc4e8" stroke="#6098c4" />
            <circle cx="9" cy="19" r="2.500" fill="#fff" />
          </Icon>
        </div>
        <div className="ml-[30px]">
          <Icon w={27} h={26}>
            <path d="M5 2h18v22H5z" fill="#b9d4e8" stroke="#6f9cc0" /><path d="M1 2h18v22H1z" fill="#8ebfe0" stroke="#a9cde4" />
            <circle cx="11" cy="13" r="9" fill="#ee7828" stroke="#fff" strokeWidth=".8" /><path d="M8 7l8 6-8 6z" fill="#fff" />
          </Icon>
        </div>
        <div className="ml-[20px] flex h-[38px] w-[59px] items-center justify-center rounded-[2px] border border-[#d5ecf8] bg-[linear-gradient(135deg,#9fd0ec,#5aace0)] shadow-[inset_0_0_0_1px_#79b8e0]">
          <Icon w={32} h={32}>
            <circle cx="15" cy="17" r="11.500" fill="#2070d0" /><path d="M20 8c5 3 6 7 5 12l-4 5-3-5 2-4-3-3zM6 22l4 1 3 4-4-1z" fill="#3cc050" /><path d="M5 14c2 6 8 10 14 10" stroke="#48b8f0" strokeWidth="3" strokeOpacity=".7" />
            <path d="M2 27c12 3 29-5 28-13 0-4-5-4-8-4" stroke="#f0b040" strokeWidth="2.500" /><path d="M0 27l7-4v6z" fill="#f0b040" />
            <path d="M2 2l15-2-1 15z" fill="#d81838" stroke="#88101c" strokeWidth=".8" />
          </Icon>
        </div>
        <div className="ml-[3px] flex h-[38px] w-[59px] items-center justify-center rounded-[2px] border border-[#f2faff] bg-[linear-gradient(135deg,#c9e5f5,#a4d0ea_50%,#d4ecf8)]">
          <div className="flex h-[32px] w-[32px] flex-col items-center justify-between bg-[linear-gradient(#24407c,#35548f_45%,#14275c)] pb-[3px] leading-none text-white">
            <span className="h-[20px] text-[21px] font-semibold leading-[25px]">W</span>
            <span className="scale-x-[1.6] text-[7px] font-semibold leading-[7px]">3DS</span>
          </div>
        </div>
      </div>
      <div className="relative ml-auto flex h-full items-center text-white">
        <Icon w={8} h={5}><path d="M0 5l4-5 4 5z" fill="#f0f4f8" /></Icon>
        <div className="ml-[13px]"><Icon w={15} h={14}><path d="M1.500 0v14" stroke="#fff" strokeWidth="1.400" /><path d="M3 1c3-1 4 1 6 1v6c-2 0-3-2-6-1zM9 4c2 0 3 1 6 0l-2 4c-1 1-2 1-4 0z" fill="#fff" /></Icon></div>
        <div className="ml-[10px]"><Icon w={15} h={15}><path d="M6 2.500h8v8H5M3 5v8.500h7M1 0v4h4V0" stroke="#fff" strokeWidth="1.300" /><path d="M7 7l8 7M15 7l-8 7" stroke="#d82028" strokeWidth="2" /></Icon></div>
        <div className="ml-[9px]"><Icon w={15} h={14}><path d="M0 4.500h3L7 0v14L3 9.500H0z" fill="#fff" /><path d="M9 5q1.500 2 0 4M11 3q3 4 0 8M13 2q4 5 0 10" stroke="#fff" /></Icon></div>
        <div className="ml-[15px] flex w-[60px] flex-col items-center gap-[4px] pb-px text-[11.8px] leading-[14px]"><span>8:11</span><span>2019/5/31</span></div>
        <div className="ml-[9px] mr-px h-[38px] w-[13px] border border-[#6f94b8] bg-[linear-gradient(135deg,#6e90b2,#1d3f68_50%,#35618e)]" />
      </div>
    </div>
  );
}

export default function App() {
  return (
    <div className="flex h-[1080px] w-[2944px] overflow-hidden bg-black font-['Noto_Sans','Noto_Sans_CJK_SC',sans-serif]">
      <div className="relative flex w-[1920px] flex-col bg-[#525252]">
        <TitleBar />
        <RibbonTabs />
        <Ribbon />
        <div className="flex flex-1">
          <LeftPanel />
          <Workspace />
        </div>
        <StatusBar />
        <Taskbar />
        <div className="absolute left-[4px] top-[6px] flex h-[37px] w-[37px] flex-col items-center rounded-full border border-[#eee] bg-[radial-gradient(circle_at_50%_30%,#fff_0,#d3d6db_55%,#888d94_100%)] pt-[4px] text-[#26396a] shadow-[0_0_3px_#333]">
          <span className="text-[20px] font-semibold leading-[20px]">W</span>
          <span className="scale-x-[1.65] text-[7.5px] font-semibold leading-[7px]">3DS</span>
        </div>
      </div>
      <div className="grid h-[768px] w-[1024px] grid-cols-2 grid-rows-2 gap-[8px] bg-black">
        <div className="bg-white" />
        <div className="bg-white" />
        <div className="bg-white" />
        <div className="bg-white" />
      </div>
    </div>
  );
}
